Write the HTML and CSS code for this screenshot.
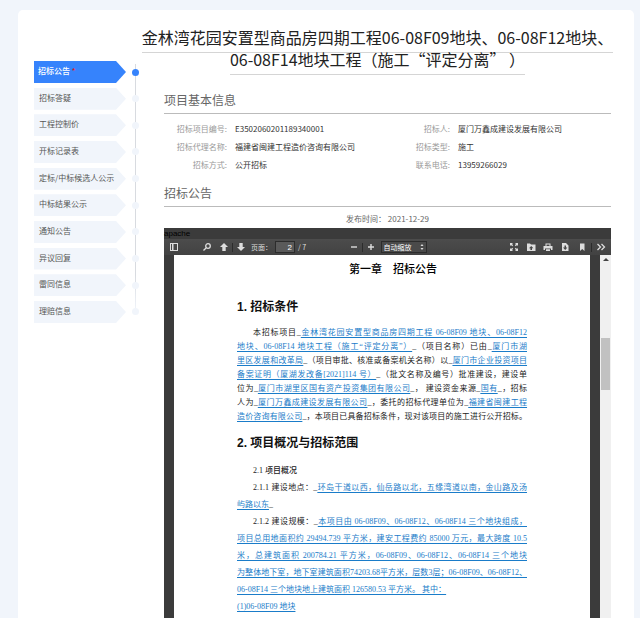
FILE: index.html
```
<!DOCTYPE html>
<html lang="zh-CN">
<head>
    <meta charset="UTF-8">
    <meta name="viewport" content="width=device-width, initial-scale=1.0">
    <title>招标公告</title>
    <link rel="stylesheet" href="styles.css">
</head>
<body>
    <div class="card">
        <nav class="steps">
            <a href="#" class="step active"><span class="tag">招标公告 <i>*</i></span></a>
            <a href="#" class="step"><span class="tag">招标答疑</span></a>
            <a href="#" class="step"><span class="tag">工程控制价</span></a>
            <a href="#" class="step"><span class="tag">开标记录表</span></a>
            <a href="#" class="step"><span class="tag">定标/中标候选人公示</span></a>
            <a href="#" class="step"><span class="tag">中标结果公示</span></a>
            <a href="#" class="step"><span class="tag">通知公告</span></a>
            <a href="#" class="step"><span class="tag">异议回复</span></a>
            <a href="#" class="step"><span class="tag">雷同信息</span></a>
            <a href="#" class="step"><span class="tag">理赔信息</span></a>
        </nav>

        <main class="main">
            <h1 class="title">
                <span>金林湾花园安置型商品房四期工程06-08F09地块、06-08F12地块、</span>
                <span>06-08F14地块工程（施工“评定分离” ）</span>
            </h1>

            <div class="content">
                <h2 class="section-title">项目基本信息</h2>
                <dl class="info">
                    <dt>招标项目编号:</dt><dd>E3502060201189340001</dd>
                    <dt>招标人:</dt><dd>厦门万鑫成建设发展有限公司</dd>
                    <dt>招标代理名称:</dt><dd>福建省闽建工程造价咨询有限公司</dd>
                    <dt>招标类型:</dt><dd>施工</dd>
                    <dt>招标方式:</dt><dd>公开招标</dd>
                    <dt>联系电话:</dt><dd>13959266029</dd>
                </dl>

                <h2 class="section-title">招标公告</h2>
                <p class="date">发布时间： 2021-12-29</p>

                <div class="viewer">
                    <div class="viewer-name">apache</div>
                    <div class="toolbar">
                        <div class="tools tools-left">
                            <button aria-label="侧栏"><svg viewBox="0 0 10 10"><path d="M1 1h8v8H1zM2 2v6h1V2zM4.500 2v6H8V2z" fill-rule="evenodd"/></svg></button>
                            <button class="find" aria-label="查找"><svg viewBox="0 0 10 10"><circle cx="6" cy="4" r="2.3" class="line"/><path d="M4.3 5.7L1.5 8.5" class="line"/></svg></button>
                            <button aria-label="上一页"><svg viewBox="0 0 10 10"><path d="M5 1l4 4H6.700v4H3.300V5H1z"/></svg></button>
                            <span class="sep"></span>
                            <button aria-label="下一页"><svg viewBox="0 0 10 10"><path d="M5 9L1 5h2.300V1h3.400v4H9z"/></svg></button>
                            <label for="pageNumber">页面：</label>
                            <input type="text" id="pageNumber" value="2">
                            <span class="total">/ 7</span>
                        </div>
                        <div class="tools tools-zoom">
                            <button aria-label="缩小"><svg viewBox="0 0 10 10"><path d="M2 4.300h6v1.400H2z"/></svg></button>
                            <span class="sep"></span>
                            <button aria-label="放大"><svg viewBox="0 0 10 10"><path d="M2 4.300h2.300V2h1.400v2.300H8v1.400H5.700V8H4.300V5.700H2z"/></svg></button>
                            <span class="zoom">
                                <select aria-label="缩放"><option>自动缩放</option></select>
                                <svg viewBox="0 0 4 6"><path d="M2 0l1.500 2h-3zM2 6L.5 4h3z"/></svg>
                            </span>
                        </div>
                        <div class="tools tools-right">
                            <button aria-label="全屏"><svg viewBox="0 0 10 10"><path d="M1 1h3L3 2l1.200 1.200-1 1L2 3 1 4zM9 1v3L8 3 6.800 4.200l-1-1L7 2 6 1zM1 9V6l1 1 1.200-1.200 1 1L3 8l1 1zM9 9H6l1-1-1.200-1.200 1-1L8 7l1-1z"/></svg></button>
                            <button aria-label="打开"><svg viewBox="0 0 10 10"><path d="M1 1.500h3l1 1h4.500V9H1zM5.200 4L3 6.300h1.400V8H6V6.300h1.400z" fill-rule="evenodd"/></svg></button>
                            <button aria-label="打印"><svg viewBox="0 0 10 10"><path d="M2.500 1.500h5V4H9.500v4H8V6.500H2V8H.5V4h2zM3.500 2.500V4h3V2.500zM3 7.200h4V9H3z" fill-rule="evenodd"/></svg></button>
                            <button aria-label="下载"><svg viewBox="0 0 10 10"><path d="M2 1h4l2.500 2.500V9H2zM4.500 3.500V5.500H3L5.200 8l2.200-2.500H6v-2z" fill-rule="evenodd"/></svg></button>
                            <button aria-label="书签"><svg viewBox="0 0 10 10"><path d="M3 1.500h4.500V9L5.200 7 3 9z"/></svg></button>
                            <span class="sep"></span>
                            <button aria-label="工具"><svg viewBox="0 0 10 10"><path d="M1.500 2l3 3-3 3M5.500 2l3 3-3 3" class="line"/></svg></button>
                        </div>
                    </div>

                    <div class="viewport">
                        <article class="sheet">
                            <h3 class="chapter">第一章　招标公告</h3>
                            <h4>1. 招标条件</h4>
                            <div class="para">
                                <p class="indent">本招标项目_<a href="#">金林湾花园安置型商品房四期工程 06-08F09 地块、06-08F12</a></p>
                                <p><a href="#">地块、06-08F14 地块工程（施工“评定分离”）</a>_（项目名称）已由_<a href="#">厦门市湖</a></p>
                                <p><a href="#">里区发展和改革局</a>_（项目审批、核准或备案机关名称）以_<a href="#">厦门市企业投资项目</a></p>
                                <p><a href="#">备案证明（厦湖发改备[2021]114 号）</a>_（批文名称及编号）批准建设，建设单</p>
                                <p>位为_<a href="#">厦门市湖里区国有资产投资集团有限公司</a>_， 建设资金来源_<a href="#">国有</a>_，招标</p>
                                <p>人为_<a href="#">厦门万鑫成建设发展有限公司</a>_，委托的招标代理单位为_<a href="#">福建省闽建工程</a></p>
                                <p><a href="#">造价咨询有限公司</a>_，本项目已具备招标条件，现对该项目的施工进行公开招标。</p>
                            </div>
                            <h4 class="second">2. 项目概况与招标范围</h4>
                            <div class="para wide">
                                <p class="indent short strong">2.1 项目概况</p>
                                <p class="indent">2.1.1 建设地点：_<a href="#">环岛干道以西，仙岳路以北，五缘湾道以南，金山路及汤</a></p>
                                <p class="short"><a href="#">屿路以东</a>_</p>
                                <p class="indent">2.1.2 建设规模：_<a href="#">本项目由 06-08F09、06-08F12、06-08F14 三个地块组成，</a></p>
                                <p><a href="#">项目总用地面积约 29494.739 平方米，建安工程费约 85000 万元，最大跨度 10.5</a></p>
                                <p><a href="#">米，总建筑面积 200784.21 平方米，06-08F09、06-08F12、06-08F14 三个地块</a></p>
                                <p><a href="#">为整体地下室，地下室建筑面积74203.68平方米，层数3层；06-08F09、06-08F12、</a></p>
                                <p class="short"><a href="#">06-08F14 三个地块地上建筑面积 126580.53 平方米。 其中：</a></p>
                                <p class="short"><a href="#">(1)06-08F09 地块</a></p>
                            </div>
                        </article>
                        <div class="scrollbar"><span class="arrow"></span><span class="thumb"></span></div>
                    </div>
                </div>
            </div>
        </main>
    </div>
</body>
</html>
```
FILE: styles.css
```
* {
    box-sizing: border-box;
}

body {
    margin: 0;
    min-height: 100vh;
    padding: 10px 6px 0 18px;
    display: flex;
    background-color: #f1f5fb;
    font-family: "Noto Sans CJK SC", sans-serif;
    font-size: 8px;
    color: #333;
}

h1, h2, h3, h4, p, dl, dd {
    margin: 0;
    font-weight: normal;
}

a {
    color: inherit;
    text-decoration: none;
}

.card {
    flex: 1;
    min-width: 0;
    display: flex;
    align-items: flex-start;
    padding: 0 23px 0 16px;
    background: #fff;
    border-radius: 5px 5px 0 0;
}

/* left steps */
.steps {
    position: relative;
    width: 106px;
    height: 262px;
    margin-top: 51px;
    display: flex;
    flex-direction: column;
    justify-content: space-between;
    flex-shrink: 0;
}

.steps::before {
    content: "";
    position: absolute;
    top: 3px;
    bottom: 11px;
    right: 4px;
    width: 1px;
    background: linear-gradient(#d8dbe0 85%, #f1f5fb);
}

.step {
    position: relative;
    display: flex;
    align-items: center;
    justify-content: space-between;
    color: #555;
}

.step::after {
    content: "";
    width: 7px;
    height: 7px;
    margin-right: 1px;
    border-radius: 50%;
    background: #f1f5fb;
}

.tag {
    width: 92px;
    height: 22px;
    padding-left: 5px;
    line-height: 20px;
    background: #f1f5fb;
    clip-path: polygon(0 0, 82px 0, 100% 50%, 82px 100%, 0 100%);
}

.active .tag {
    padding-left: 4px;
    background: #3683fc;
    color: #fff;
    font-weight: 500;
}

.active::after {
    background: #3683fc;
}

.tag i {
    color: #e02020;
    font-style: normal;
}

/* right side */
.main {
    flex: 1;
    min-width: 0;
    align-self: stretch;
    display: flex;
    flex-direction: column;
    padding-top: 16px;
}

.title {
    display: flex;
    flex-direction: column;
    align-items: center;
    margin-left: 4px;
    font-size: 16px;
    color: #222;
    white-space: nowrap;
}

.title span {
    height: 22px;
    line-height: 22px;
    box-sizing: content-box;
    padding-bottom: 4px;
    margin-bottom: -5px;
    border-bottom: 1px solid #d5d5d5;
}

.content {
    flex: 1;
    display: flex;
    flex-direction: column;
    margin-left: 24px;
    padding-top: 20px;
}

.section-title {
    height: 24px;
    font-size: 12px;
    line-height: 20px;
    color: #666;
    border-bottom: 1px solid #bbb;
}

.info {
    display: grid;
    grid-template-columns: 63px 144px 63px 1fr;
    column-gap: 8px;
    line-height: 18px;
    padding: 6px 0 9px;
    white-space: nowrap;
}

.info dt {
    text-align: right;
    color: #999;
}

.date {
    line-height: 18px;
    padding-top: 3px;
    color: #666;
    text-align: center;
}

.viewer {
    flex: 1;
    display: flex;
    flex-direction: column;
    background: #3b3b3b;
}

.viewer-name {
    height: 11px;
    line-height: 11px;
    font-family: "Liberation Sans", sans-serif;
    color: #000;
}

/* toolbar */
.toolbar {
    height: 16px;
    display: grid;
    grid-template-columns: 1fr auto 1fr;
    align-items: center;
    background: linear-gradient(#4c4c4c, #424242);
    color: #ddd;
}

.tools {
    display: flex;
    align-items: center;
}

.tools button {
    display: flex;
    padding: 0;
    border: 0;
    background: none;
    cursor: pointer;
}

.tools svg {
    width: 10px;
    height: 10px;
    fill: #ddd;
}

.tools .line {
    fill: none;
    stroke: #ddd;
    stroke-width: 1.3;
}

.sep {
    width: 1px;
    height: 9px;
    background: #2c2c2c;
}

.tools-left {
    padding-left: 5px;
    gap: 3px;
    white-space: nowrap;
}

.tools-left .find {
    margin-left: 20px;
    margin-right: 4px;
}

.tools-left label {
    margin-left: 2px;
    font-size: 7px;
}

#pageNumber {
    width: 20px;
    height: 12px;
    padding: 0 2px;
    border: 1px solid #2c2c2c;
    background: #5a5a5a;
    color: #fff;
    font: 8px "Liberation Sans", sans-serif;
    text-align: right;
}

.total {
    font-size: 7px;
}

.tools-zoom {
    gap: 3px;
}

.zoom {
    position: relative;
    margin-left: 2px;
    display: flex;
}

.zoom select {
    width: 46px;
    height: 12px;
    padding: 0 2px;
    border: 1px solid #2c2c2c;
    background: #4a4a4a;
    color: #fff;
    font: 7px/10px "Noto Sans CJK SC", sans-serif;
    appearance: none;
}

.zoom svg {
    position: absolute;
    top: 3px;
    right: 3px;
    width: 4px;
    height: 6px;
}

.tools-right {
    justify-content: flex-end;
    gap: 7px;
    padding-right: 5px;
}

.tools-right .sep {
    margin: 0 -3px;
}

/* document */
.viewport {
    flex: 1;
    display: flex;
    padding-left: 10px;
}

.sheet {
    flex: 1;
    min-width: 0;
    margin-right: 10px;
    padding: 3px 63px 0;
    background: #fff;
    color: #222;
}

.chapter {
    font-size: 11px;
    line-height: 20px;
    text-align: center;
    font-weight: 500;
    color: #000;
    padding-left: 22px;
}

.sheet h4 {
    margin-top: 19px;
    font-family: "Liberation Sans", "Noto Sans CJK SC", sans-serif;
    font-size: 12px;
    line-height: 20px;
    font-weight: bold;
    color: #111;
}

.sheet .second {
    margin-top: 9px;
}

.para {
    padding-top: 9px;
    line-height: 14px;
    font-family: "Liberation Serif", "Noto Sans CJK SC", serif;
}

.para p {
    white-space: nowrap;
    text-align-last: justify;
}

.para .short {
    text-align-last: left;
}

.para .indent {
    padding-left: 16px;
}

.para a {
    color: #1a7cc9;
    text-decoration: underline;
    text-underline-offset: 2px;
}

.wide {
    line-height: 17px;
}

.para .strong {
    font-weight: 500;
}

.scrollbar {
    width: 11px;
    padding-top: 3px;
    display: flex;
    flex-direction: column;
    align-items: center;
    background: #f0f0f0;
}

.arrow {
    border: 3px solid transparent;
    border-top-width: 0;
    border-bottom-color: #444;
}

.thumb {
    width: 9px;
    height: 52px;
    margin-top: 77px;
    background: #c1c1c1;
}
```
